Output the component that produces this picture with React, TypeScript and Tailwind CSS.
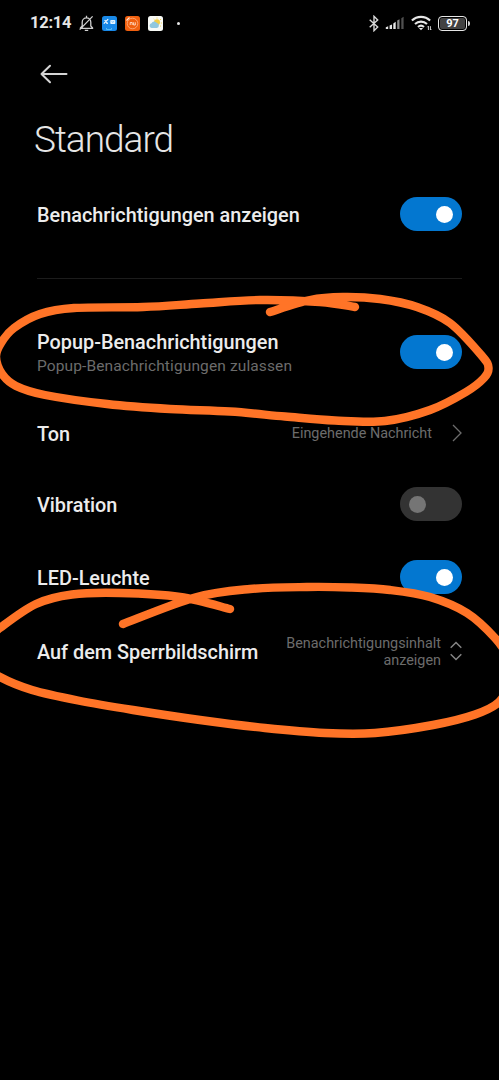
import type { ReactNode } from "react";

type Point = [number, number];

const POPUP_LOOP: Point[] = [
  [355, 307], [320, 302], [260, 300], [200, 303.5], [143, 307], [74, 308], [40, 314], [14, 328],
  [1, 343], [-4, 357], [2, 374], [16, 386], [45, 395], [107, 404], [170, 409], [230, 411.5], [285, 416.5],
  [335, 420.5], [385, 421], [430, 410], [466, 392], [484, 378], [488.5, 368], [482, 356], [450, 323], [417, 307],
  [380, 299], [343, 297], [310, 300], [270, 312],
];

const LOCKSCREEN_LOOP: Point[] = [
  [230, 609], [180, 597], [120, 593], [72, 594.5], [36, 604], [0, 628], [-18, 644], [-16, 664],
  [0, 677], [32, 690], [78, 700.5], [133, 710], [200, 720], [265, 728], [325, 733],
  [375, 733], [433, 725], [475, 714.5], [499, 702], [510, 680], [508, 658], [495, 638], [467, 613],
  [430, 597], [390, 590], [350, 587.5], [307, 587], [250, 589], [195, 597.5], [123, 624],
];

/** Smooth curve through all the points (Catmull-Rom as cubic Béziers). */
function smooth(p: Point[]): string {
  let d = `M${p[0][0]} ${p[0][1]}`;
  for (let i = 0; i < p.length - 1; i++) {
    const a = p[Math.max(i - 1, 0)];
    const b = p[i];
    const c = p[i + 1];
    const e = p[Math.min(i + 2, p.length - 1)];
    d += `C${b[0] + (c[0] - a[0]) / 6} ${b[1] + (c[1] - a[1]) / 6} ${c[0] - (e[0] - b[0]) / 6} ${c[1] - (e[1] - b[1]) / 6} ${c[0]} ${c[1]}`;
  }
  return d;
}

function Toggle({ on }: { on: boolean }) {
  return (
    <span
      role="switch"
      aria-checked={on}
      className={`flex h-[34px] w-[62px] shrink-0 items-center rounded-full px-[9px] ${on ? "justify-end bg-[#0377d0]" : "justify-start bg-[#333333]"}`}
    >
      <span className={`size-[17px] rounded-full ${on ? "bg-white" : "bg-[#757575]"}`} />
    </span>
  );
}

function Row({ title, note, children }: { title: string; note?: string; children: ReactNode }) {
  return (
    <div className="flex h-[72px] items-center justify-between">
      <div className={`flex flex-col whitespace-nowrap ${note ? "pt-[5px]" : "pt-[3px]"}`}>
        <span className="text-[19.85px] leading-6 font-medium text-[#ececec]">{title}</span>
        {note && <span className="text-[15.5px] leading-[23px] tracking-[0.12px] text-[#6c6c6c]">{note}</span>}
      </div>
      {children}
    </div>
  );
}

function StatusBar() {
  return (
    <header className="flex h-[46px] items-center justify-between pr-[29px] pl-[30px]">
      <div className="flex items-center">
        <span className="w-[49px] text-[16.5px] leading-5 font-bold tracking-[-0.25px] text-[#e6e6e6]">12:14</span>
        <svg width="15" height="17" viewBox="0 0 15 17" fill="none" stroke="#d0d0d0" strokeWidth="1.3">
          <path d="M7.5 .8v1.6M.8 13.4h13.4M3.2 13V7.2a4.3 4.3 0 0 1 8.6 0V11l2 2.2M3.2 11l-2 2.2M5.8 15.4h3.4M.7 14.6L13.6 1.4" />
        </svg>
        <svg className="ml-2" width="15" height="15" viewBox="0 0 15 15">
          <rect width="15" height="15" rx="2.5" fill="#1989e8" />
          <path d="M1.8 7.6l4.4-4.4M2.6 4.2l2.6 2.6M4.4 7.4h1.4" stroke="#fff" strokeWidth="1.1" />
          <rect x="8.3" y="4" width="5" height="4" rx=".8" fill="#e8f6ff" />
          <path d="M9.5 5.3l1.3 1 1.3-1" stroke="#4ba5ef" strokeWidth=".7" fill="none" />
          <path d="M4.5 12v1.5h5V12" stroke="#5cc0f5" strokeWidth=".9" fill="none" />
        </svg>
        <svg className="ml-2" width="15" height="15" viewBox="0 0 15 15">
          <rect width="15" height="15" rx="2.5" fill="#f0600f" />
          <circle cx="7.5" cy="7.5" r="5.3" fill="none" stroke="#ffb286" strokeWidth=".8" />
          <path d="M1.5 4.5l3-3" stroke="#ffe6d8" strokeWidth="1.1" />
          <path d="M5.2 9V6.5h2V9M8.6 6.3V9h1.7V6.3" fill="none" stroke="#ffe0cc" strokeWidth=".9" />
        </svg>
        <svg className="ml-2" width="15" height="15" viewBox="0 0 15 15">
          <rect width="15" height="15" rx="2.5" fill="#f8faf6" />
          <circle cx="9" cy="6.3" r="3" fill="#f4cd45" />
          <path d="M9 1.5v1M13 3l-1 1M14 7h-1.2M13 10.4l-1-.7M5.7 3l.8.8" stroke="#f4cd45" strokeWidth=".9" />
          <path d="M3.5 12a2.4 2.4 0 0 1 0-4.7 3 3 0 0 1 5.4-.2 2.5 2.5 0 0 1 0 4.9z" fill="#91c8de" />
        </svg>
        <span className="ml-[14px] size-[3px] rounded-full bg-[#e6e6e6]" />
      </div>
      <div className="flex items-center">
        <svg width="10" height="17" viewBox="0 0 10 17" fill="none" stroke="#d8d8d8" strokeWidth="1.4">
          <path d="M.7 4.7l8 7.4L5 15.7V1.3l3.7 3.6-8 7.4" />
        </svg>
        <svg className="ml-[6px]" width="20" height="14" viewBox="0 0 20 14">
          <path d="M.8 11.2l2.4-1V13H.8zM4.6 9.6L7 8.4V13H4.6zM8.3 7.4l2.4-1.6V13H8.3z" fill="#e6e6e6" />
          <path d="M12.2 4.6l2.3-1.4V13h-2.3z" fill="#8a8a8a" />
          <path d="M16.3 2.2L18.6.8V13h-2.3z" fill="#505050" />
        </svg>
        <svg className="ml-[6px]" width="22" height="16" viewBox="0 0 22 16" fill="none" stroke="#e6e6e6" strokeWidth="2.1">
          <path d="M.9 5.6a13 13 0 0 1 18.2 0M4 9a8.8 8.8 0 0 1 12 0M7 12a4.5 4.5 0 0 1 6 0" />
          <path d="M7.9 13h4.2L10 15.3z" fill="#e6e6e6" stroke="none" />
          <path d="M17.4 15v-3.8l-1 1M19.4 11.2V15l1-1" strokeWidth=".9" />
        </svg>
        <div className="ml-[5px] flex items-center">
          <span className="flex h-[15px] w-[29px] items-center justify-center rounded-[4px] border-[1.5px] border-[#e6e6e6] bg-[#424242] text-[11px] leading-none font-bold text-white shadow-[inset_0_0_0_1px_black]">
            97
          </span>
          <span className="ml-px h-[5px] w-[2px] rounded-r-sm bg-[#d0d0d0]" />
        </div>
      </div>
    </header>
  );
}

export default function App() {
  return (
    <div className="relative h-[1080px] w-[499px] overflow-hidden bg-black font-['Roboto',sans-serif]">
      <StatusBar />
      <div className="flex h-[56px] items-center pl-[40px]">
        <svg width="28" height="20" viewBox="0 0 28 20" fill="none" stroke="#d5d5d5" strokeWidth="2" strokeLinecap="round" strokeLinejoin="round">
          <path d="M10 1.8L1.5 10l8.5 8.2M1.5 10h25" />
        </svg>
      </div>
      <h1 className="flex h-[76px] items-center pl-[34px] text-[37px] font-light tracking-[-1px] text-[#e6e6e6]">Standard</h1>
      <main className="flex flex-col pr-[37px] pl-[37px]">
        <Row title="Benachrichtigungen anzeigen">
          <Toggle on />
        </Row>
        <div className="mt-7 mb-[37px] h-px bg-[#1c1c1c]" />
        <Row title="Popup-Benachrichtigungen" note="Popup-Benachrichtigungen zulassen">
          <Toggle on />
        </Row>
        <div className="mt-[9px]">
          <Row title="Ton">
            <div className="flex items-center text-[#6c6c6c]">
              <span className="pt-[2px] text-[14.4px]">Eingehende Nachricht</span>
              <svg className="ml-5" width="10" height="18" viewBox="0 0 10 18" fill="none" stroke="currentColor" strokeWidth="1.3">
                <path d="M1 1l8 8-8 8" />
              </svg>
            </div>
          </Row>
        </div>
        <div className="-mt-px">
          <Row title="Vibration">
            <Toggle on={false} />
          </Row>
        </div>
        <div className="mt-px">
          <Row title="LED-Leuchte">
            <Toggle on />
          </Row>
        </div>
        <div className="mt-[2px]">
          <Row title="Auf dem Sperrbildschirm">
            <div className="flex items-center text-[#6c6c6c]">
              <span className="pt-[2px] text-right text-[14.4px] leading-[17px] whitespace-nowrap">
                Benachrichtigungsinhalt
                <br />
                anzeigen
              </span>
              <svg className="ml-[9px]" width="12" height="20" viewBox="0 0 12 20" fill="none" stroke="#858585" strokeWidth="1.5">
                <path d="M.7 6.7L6 1.5l5.3 5.2M.7 13.3L6 18.5l5.3-5.2" />
              </svg>
            </div>
          </Row>
        </div>
      </main>
      <svg
        className="pointer-events-none absolute inset-0"
        width="499"
        height="1080"
        viewBox="0 0 499 1080"
        fill="none"
        stroke="#ff7427"
        strokeWidth="8.4"
        strokeLinecap="round"
        strokeLinejoin="round"
      >
        <path d={smooth(POPUP_LOOP)} />
        <path d={smooth(LOCKSCREEN_LOOP)} />
      </svg>
    </div>
  );
}
